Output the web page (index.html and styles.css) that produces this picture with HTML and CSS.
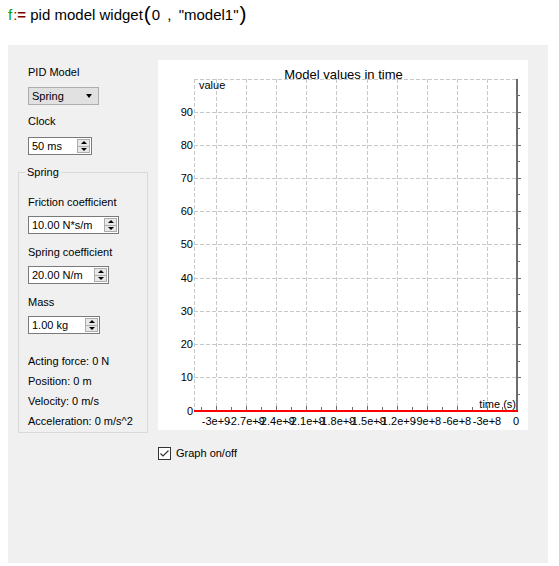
FILE: index.html
```html
<!DOCTYPE html>
<html>
<head>
<meta charset="utf-8">
<link rel="stylesheet" href="styles.css">
</head>
<body>
<div class="formula"><span class="fn">f</span><span class="colon">:</span><span class="eq">=</span> pid model widget<span class="paren">(</span><span class="args">0 , "model1"</span><span class="paren">)</span></div>
<div class="panel">
  <div class="controls">
    <div class="label">PID Model</div>
    <div class="combo"><span class="val">Spring</span><span class="arrow"></span></div>
    <div class="label gap10">Clock</div>
    <div class="spin w64"><span class="val">50 ms</span><span class="btns"><span class="up"></span><span class="down"></span></span></div>
    <fieldset class="group">
      <legend>Spring</legend>
      <div class="label">Friction coefficient</div>
      <div class="spin w91"><span class="val">10.00 N*s/m</span><span class="btns"><span class="up"></span><span class="down"></span></span></div>
      <div class="label gap12">Spring coefficient</div>
      <div class="spin w81"><span class="val">20.00 N/m</span><span class="btns"><span class="up"></span><span class="down"></span></span></div>
      <div class="label gap12">Mass</div>
      <div class="spin w72"><span class="val">1.00 kg</span><span class="btns"><span class="up"></span><span class="down"></span></span></div>
      <div class="readouts">
        <div class="readout">Acting force: 0 N</div>
        <div class="readout">Position: 0 m</div>
        <div class="readout">Velocity: 0 m/s</div>
        <div class="readout">Acceleration: 0 m/s^2</div>
      </div>
    </fieldset>
  </div>
  <div class="graph-col">
    <svg class="chart" width="370" height="370" viewBox="0 0 370 370">
      <g class="grid">
        <line x1="36" y1="19.5" x2="360" y2="19.5"/>
        <line x1="36" y1="52.5" x2="360" y2="52.5"/>
        <line x1="36" y1="85.5" x2="360" y2="85.5"/>
        <line x1="36" y1="118.5" x2="360" y2="118.5"/>
        <line x1="36" y1="151.5" x2="360" y2="151.5"/>
        <line x1="36" y1="184.5" x2="360" y2="184.5"/>
        <line x1="36" y1="218.5" x2="360" y2="218.5"/>
        <line x1="36" y1="251.5" x2="360" y2="251.5"/>
        <line x1="36" y1="284.5" x2="360" y2="284.5"/>
        <line x1="36" y1="317.5" x2="360" y2="317.5"/>
        <line x1="36.5" y1="19" x2="36.5" y2="351"/>
        <line x1="58.5" y1="19" x2="58.5" y2="351"/>
        <line x1="88.5" y1="19" x2="88.5" y2="351"/>
        <line x1="118.5" y1="19" x2="118.5" y2="351"/>
        <line x1="148.5" y1="19" x2="148.5" y2="351"/>
        <line x1="178.5" y1="19" x2="178.5" y2="351"/>
        <line x1="209.5" y1="19" x2="209.5" y2="351"/>
        <line x1="239.5" y1="19" x2="239.5" y2="351"/>
        <line x1="269.5" y1="19" x2="269.5" y2="351"/>
        <line x1="299.5" y1="19" x2="299.5" y2="351"/>
        <line x1="329.5" y1="19" x2="329.5" y2="351"/>
      </g>
      <g class="ticks">
        <rect x="358" y="19" width="2" height="332"/>
        <rect x="360" y="52" width="3" height="1"/>
        <rect x="360" y="85" width="3" height="1"/>
        <rect x="360" y="118" width="3" height="1"/>
        <rect x="360" y="151" width="3" height="1"/>
        <rect x="360" y="184" width="3" height="1"/>
        <rect x="360" y="218" width="3" height="1"/>
        <rect x="360" y="251" width="3" height="1"/>
        <rect x="360" y="284" width="3" height="1"/>
        <rect x="360" y="317" width="3" height="1"/>
        <rect x="360" y="35" width="2" height="1"/>
        <rect x="360" y="68" width="2" height="1"/>
        <rect x="360" y="101" width="2" height="1"/>
        <rect x="360" y="134" width="2" height="1"/>
        <rect x="360" y="168" width="2" height="1"/>
        <rect x="360" y="201" width="2" height="1"/>
        <rect x="360" y="234" width="2" height="1"/>
        <rect x="360" y="267" width="2" height="1"/>
        <rect x="360" y="301" width="2" height="1"/>
        <rect x="360" y="334" width="2" height="1"/>
        <rect x="43" y="347" width="1" height="3"/>
        <rect x="58" y="346" width="1" height="4"/>
        <rect x="73" y="347" width="1" height="3"/>
        <rect x="88" y="346" width="1" height="4"/>
        <rect x="103" y="347" width="1" height="3"/>
        <rect x="118" y="346" width="1" height="4"/>
        <rect x="133" y="347" width="1" height="3"/>
        <rect x="148" y="346" width="1" height="4"/>
        <rect x="163" y="347" width="1" height="3"/>
        <rect x="178" y="346" width="1" height="4"/>
        <rect x="194" y="347" width="1" height="3"/>
        <rect x="209" y="346" width="1" height="4"/>
        <rect x="224" y="347" width="1" height="3"/>
        <rect x="239" y="346" width="1" height="4"/>
        <rect x="254" y="347" width="1" height="3"/>
        <rect x="269" y="346" width="1" height="4"/>
        <rect x="284" y="347" width="1" height="3"/>
        <rect x="299" y="346" width="1" height="4"/>
        <rect x="314" y="347" width="1" height="3"/>
        <rect x="329" y="346" width="1" height="4"/>
        <rect x="344" y="347" width="1" height="3"/>
      </g>
      <line class="series" x1="36" y1="351" x2="360" y2="351"/>
      <text class="title" x="185.5" y="19">Model values in time</text>
      <text class="axis-name" x="41" y="29">value</text>
      <text class="axis-name end" x="358" y="348">time (s)</text>
      <g class="ylab">
        <text x="35" y="56">90</text>
        <text x="35" y="89">80</text>
        <text x="35" y="122">70</text>
        <text x="35" y="155">60</text>
        <text x="35" y="188">50</text>
        <text x="35" y="222">40</text>
        <text x="35" y="255">30</text>
        <text x="35" y="288">20</text>
        <text x="35" y="321">10</text>
        <text x="35" y="355">0</text>
      </g>
      <g class="xlab">
        <text x="58" y="365">-3e+9</text>
        <text x="88" y="365">-2.7e+9</text>
        <text x="118" y="365">-2.4e+9</text>
        <text x="148" y="365">-2.1e+9</text>
        <text x="178.5" y="365">-1.8e+9</text>
        <text x="209" y="365">-1.5e+9</text>
        <text x="239" y="365">-1.2e+9</text>
        <text x="269" y="365">-9e+8</text>
        <text x="299" y="365">-6e+8</text>
        <text x="329" y="365">-3e+8</text>
        <text x="358" y="365">0</text>
      </g>
    </svg>
    <div class="check">
      <span class="box"><svg width="11" height="11" viewBox="0 0 11 11"><path d="M1.5 5.5 L4 8 L9.5 2.5" fill="none" stroke="#333" stroke-width="1.2"/></svg></span>
      <span>Graph on/off</span>
    </div>
  </div>
</div>
</body>
</html>
```
FILE: styles.css
```css
* { box-sizing: border-box; }
body {
  margin: 0;
  background: #ffffff;
  font-family: "Liberation Sans", Arial, sans-serif;
  color: #000;
}
.formula {
  height: 45px;
  padding: 3px 8px 0;
  font-size: 15px;
  line-height: 22px;
  white-space: nowrap;
}
.fn { color: #00a000; }
.colon { color: #c00000; margin-left: 1px; }
.eq { color: #800000; font-weight: bold; }
.paren { font-size: 21px; vertical-align: -1px; margin: 0 1px; }
.args { word-spacing: 3px; }

.panel {
  margin-left: 8px;
  width: 540px;
  height: 518px;
  background: #f0f0f0;
  display: flex;
  padding: 15px 0 0 10px;
  font-size: 11px;
  line-height: 13px;
}
.controls {
  width: 130px;
  padding-top: 6px;
}
.controls > .label,
.controls > .combo,
.controls > .spin { margin-left: 10px; }
.label { white-space: nowrap; }
.gap10 { margin-top: 10px; }
.gap12 { margin-top: 12px; }

.combo {
  margin-top: 8px;
  width: 71px;
  height: 18px;
  background: #e1e1e1;
  border: 1px solid #adadad;
  display: flex;
  align-items: center;
  justify-content: space-between;
  padding: 0 6px 0 3px;
}
.arrow {
  width: 0;
  height: 0;
  border-left: 3.5px solid transparent;
  border-right: 3.5px solid transparent;
  border-top: 4px solid #000;
}

.spin {
  margin-top: 9px;
  height: 18px;
  background: #fff;
  border: 1px solid #7a7a7a;
  display: flex;
}
.group .spin { margin-top: 7px; }
.w64 { width: 64px; }
.w91 { width: 91px; }
.w81 { width: 81px; }
.w72 { width: 72px; }
.spin .val {
  flex: 1;
  padding-left: 3px;
  line-height: 16px;
  white-space: nowrap;
}
.btns {
  width: 13px;
  margin: 1px 1px 0 0;
  height: 14px;
  display: flex;
  flex-direction: column;
  border: 1px solid #adadad;
  background: #e8e8e8;
}
.btns span {
  flex: 1;
  display: flex;
  align-items: center;
  justify-content: center;
}
.btns .up { border-bottom: 1px solid #adadad; }
.btns .up::after {
  content: "";
  border-left: 3px solid transparent;
  border-right: 3px solid transparent;
  border-bottom: 3px solid #000;
}
.btns .down::after {
  content: "";
  border-left: 3px solid transparent;
  border-right: 3px solid transparent;
  border-top: 3px solid #000;
}

.group {
  margin: 11px 0 0 0;
  width: 130px;
  border: 1px solid #d9d9d9;
  padding: 17px 0 4px 9px;
}
.group legend {
  padding: 0 2px;
  margin-left: -3px;
  line-height: 13px;
}
.readouts {
  margin-top: 21px;
  display: flex;
  flex-direction: column;
  gap: 7px;
}
.readout { white-space: nowrap; }

.graph-col {
  margin-left: 10px;
  display: flex;
  flex-direction: column;
}
.chart {
  display: block;
  background: #fff;
}
.grid line {
  stroke: #c8c8c8;
  stroke-width: 1;
  stroke-dasharray: 4 2;
}
.ticks rect { fill: #6d6d6d; }
.series { stroke: #ff0000; stroke-width: 2; }
.chart text {
  font-family: "Liberation Sans", Arial, sans-serif;
  font-size: 11px;
  fill: #000;
}
.chart .title { font-size: 13px; text-anchor: middle; }
.chart .end { text-anchor: end; }
.ylab text { text-anchor: end; }
.xlab text { text-anchor: middle; }

.check {
  margin-top: 17px;
  display: flex;
  align-items: center;
  gap: 5px;
  line-height: 13px;
}
.box {
  width: 13px;
  height: 13px;
  border: 1px solid #333;
  background: #fff;
  display: flex;
  align-items: center;
  justify-content: center;
}
.box svg { display: block; }
```
